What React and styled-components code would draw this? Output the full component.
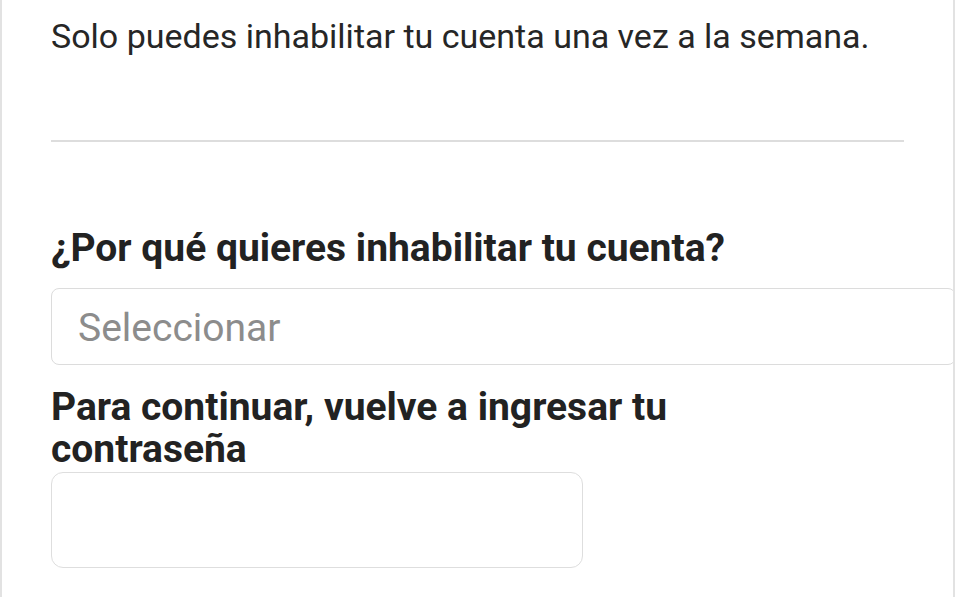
import React from 'react';
import styled, { createGlobalStyle } from 'styled-components';

const Global = createGlobalStyle`
  html, body {
    margin: 0;
    padding: 0;
    background: #ffffff;
  }
  body {
    font-family: Roboto, 'Noto Sans', 'Liberation Sans', sans-serif;
    color: #212121;
  }
`;

const Card = styled.div`
  width: 955px;
  height: 597px;
  box-sizing: border-box;
  border-left: 2px solid #e2e2e2;
  border-right: 2px solid #e2e2e2;
  padding: 15px 49px 0 49px;
  overflow: hidden;
  display: flex;
  flex-direction: column;
  align-items: flex-start;
`;

const Note = styled.p`
  margin: 0;
  font-size: 34px;
  line-height: 42px;
  font-weight: 400;
  color: #262626;
`;

const Divider = styled.hr`
  align-self: stretch;
  margin: 83px 0 0;
  border: none;
  height: 2px;
  background: #dddddd;
`;

const Heading = styled.h2`
  margin: ${p => p.$top}px 0 0;
  max-width: ${p => p.$max || 'none'};
  font-size: 39px;
  line-height: ${p => p.$lh || 46}px;
  font-weight: 700;
  color: #222222;
`;

const Select = styled.div`
  box-sizing: border-box;
  margin-top: 17px;
  width: calc(100% + 52px);
  height: 77px;
  border: 1.5px solid #dcdcdc;
  border-radius: 8px;
  display: flex;
  align-items: center;
  padding: 2px 0 0 26px;
  font-size: 39px;
  color: #8c8c8c;
`;

const Field = styled.div`
  box-sizing: border-box;
  margin-top: 2px;
  width: 532px;
  height: 96px;
  border: 1.5px solid #dedede;
  border-radius: 12px;
  background: #ffffff;
`;

export default function App() {
  return (
    <>
      <Global />
      <Card>
        <Note>Solo puedes inhabilitar tu cuenta una vez a la semana.</Note>
        <Divider />
        <Heading $top={83}>¿Por qué quieres inhabilitar tu cuenta?</Heading>
        <Select>Seleccionar</Select>
        <Heading $top={21} $lh={42} $max="700px">
          Para continuar, vuelve a ingresar tu contraseña
        </Heading>
        <Field />
      </Card>
    </>
  );
}
